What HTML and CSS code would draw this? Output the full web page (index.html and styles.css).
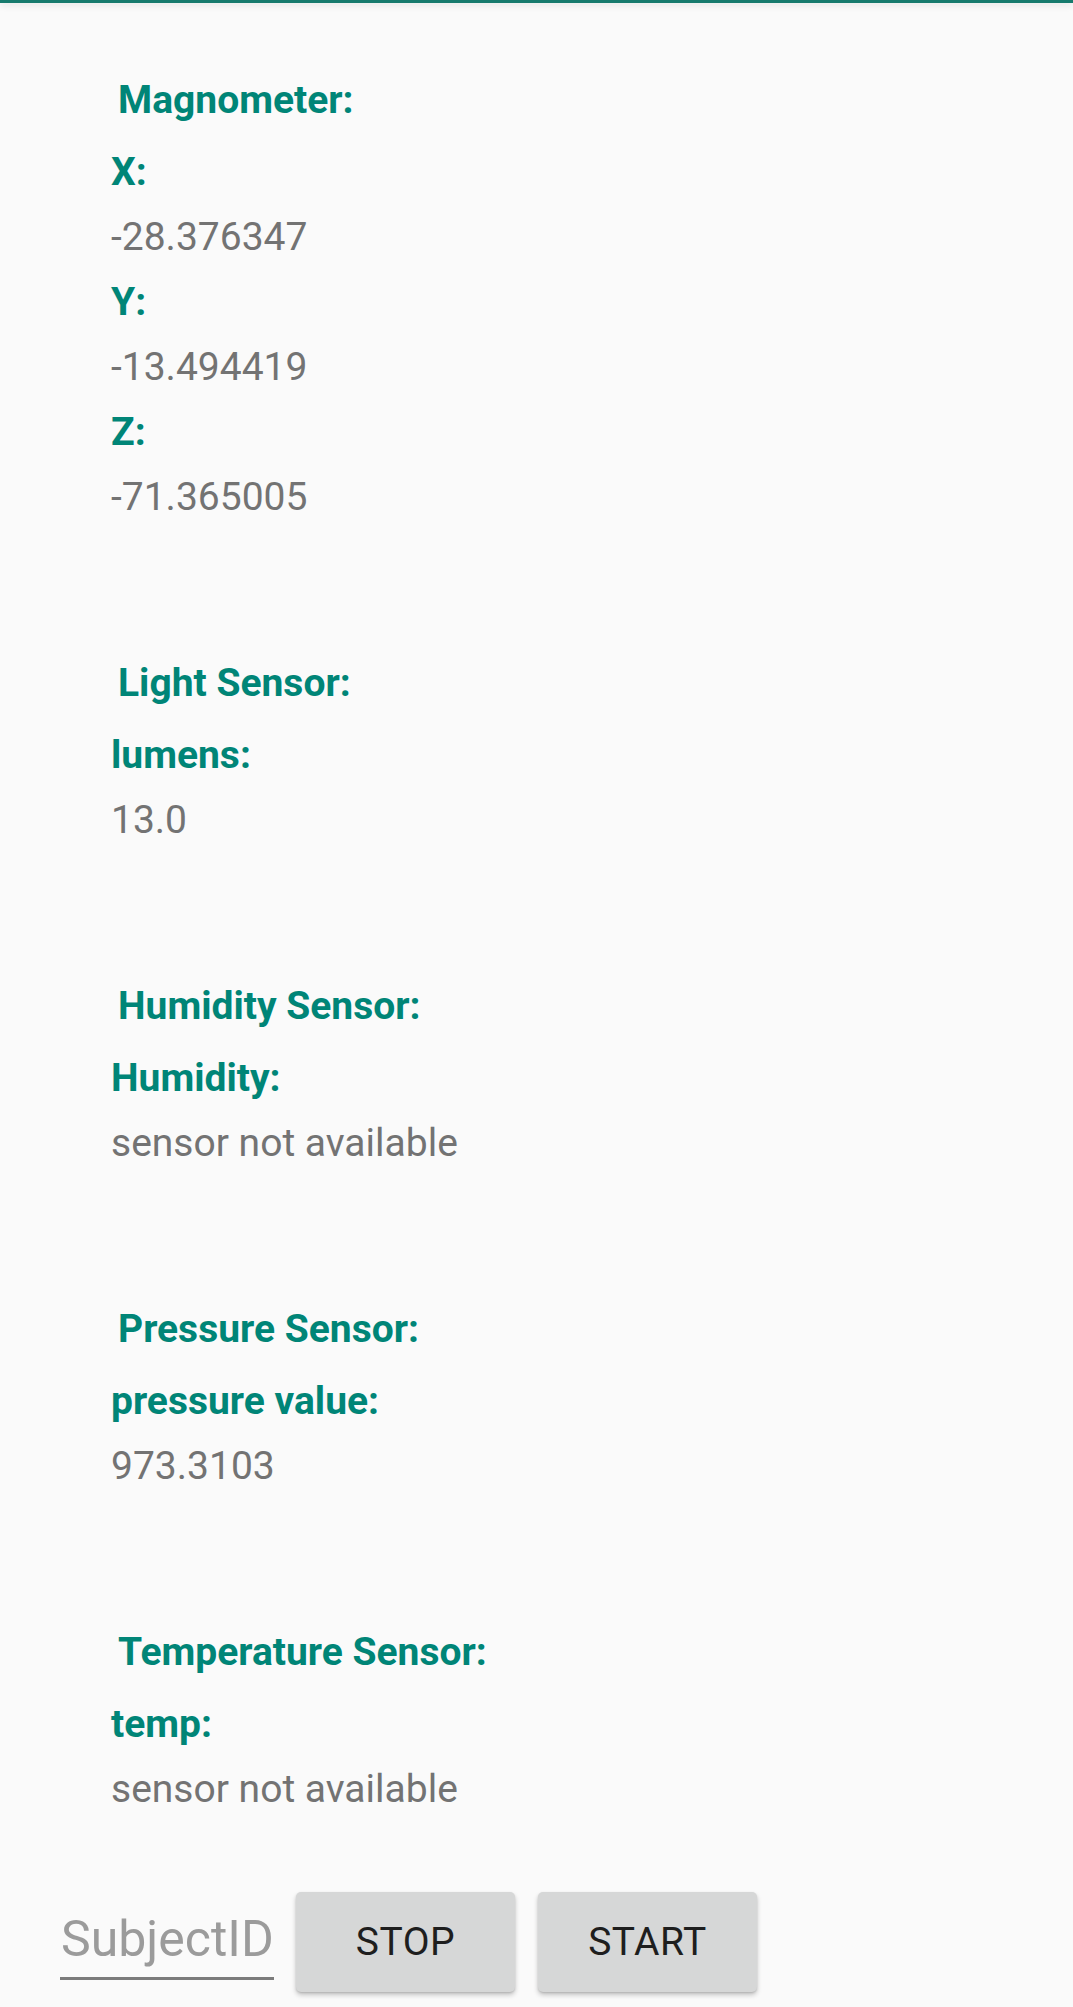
FILE: index.html
```html
<!DOCTYPE html>
<html>
<head>
<meta charset="utf-8">
<link rel="stylesheet" href="styles.css">
</head>
<body>
<div class="appbar-edge"></div>
<main class="content">
  <section class="sensor">
    <div class="heading">Magnometer:</div>
    <div class="label">X:</div>
    <div class="value">-28.376347</div>
    <div class="label">Y:</div>
    <div class="value">-13.494419</div>
    <div class="label">Z:</div>
    <div class="value">-71.365005</div>
  </section>
  <section class="sensor">
    <div class="heading">Light Sensor:</div>
    <div class="label">lumens:</div>
    <div class="value">13.0</div>
  </section>
  <section class="sensor">
    <div class="heading">Humidity Sensor:</div>
    <div class="label">Humidity:</div>
    <div class="value">sensor not available</div>
  </section>
  <section class="sensor">
    <div class="heading">Pressure Sensor:</div>
    <div class="label">pressure value:</div>
    <div class="value">973.3103</div>
  </section>
  <section class="sensor">
    <div class="heading">Temperature Sensor:</div>
    <div class="label">temp:</div>
    <div class="value">sensor not available</div>
  </section>
</main>
<div class="controls">
  <div class="subject-input">SubjectID</div>
  <button class="btn">STOP</button>
  <button class="btn">START</button>
</div>
</body>
</html>
```
FILE: styles.css
```css
html, body {
  margin: 0;
  padding: 0;
  background: #fafafa;
}
body {
  font-family: Roboto, "Noto Sans", sans-serif;
  height: 2007px;
  overflow: hidden;
  position: relative;
}
.appbar-edge {
  height: 3px;
  background: #167a6d;
  box-shadow: 0 2px 7px rgba(0, 0, 0, 0.14);
}
.content {
  padding: 65px 0 0 111px;
}
.sensor {
  display: flex;
  flex-direction: column;
  margin-bottom: 121px;
}
.sensor:last-child {
  margin-bottom: 0;
}
.heading, .label, .value {
  font-size: 39px;
  line-height: 65px;
  white-space: nowrap;
}
.heading {
  color: #008577;
  font-weight: 700;
  padding-left: 7px;
  margin-bottom: 7px;
}
.label {
  color: #008577;
  font-weight: 700;
}
.value {
  color: #737373;
  font-weight: 400;
}
.controls {
  display: flex;
  align-items: flex-start;
  margin-top: 70px;
  padding-left: 60px;
}
.subject-input {
  width: 214px;
  box-sizing: border-box;
  font-size: 50px;
  line-height: 58px;
  color: #9b9b9b;
  padding-top: 18px;
  padding-bottom: 9px;
  padding-left: 1px;
  border-bottom: 3px solid #7b7b7b;
  white-space: nowrap;
}
.btn {
  margin-left: 22px;
  width: 219px;
  height: 100px;
  border: none;
  border-radius: 5px;
  background: #d6d7d7;
  color: #1e1e1e;
  font-family: Roboto, "Noto Sans", sans-serif;
  font-weight: 400;
  font-size: 39px;
  letter-spacing: 0.5px;
  box-shadow: 0 3px 5px rgba(0, 0, 0, 0.22), 0 1px 2px rgba(0, 0, 0, 0.12);
  padding: 0;
  display: flex;
  align-items: center;
  justify-content: center;
}
.btn + .btn {
  margin-left: 23px;
}
```
